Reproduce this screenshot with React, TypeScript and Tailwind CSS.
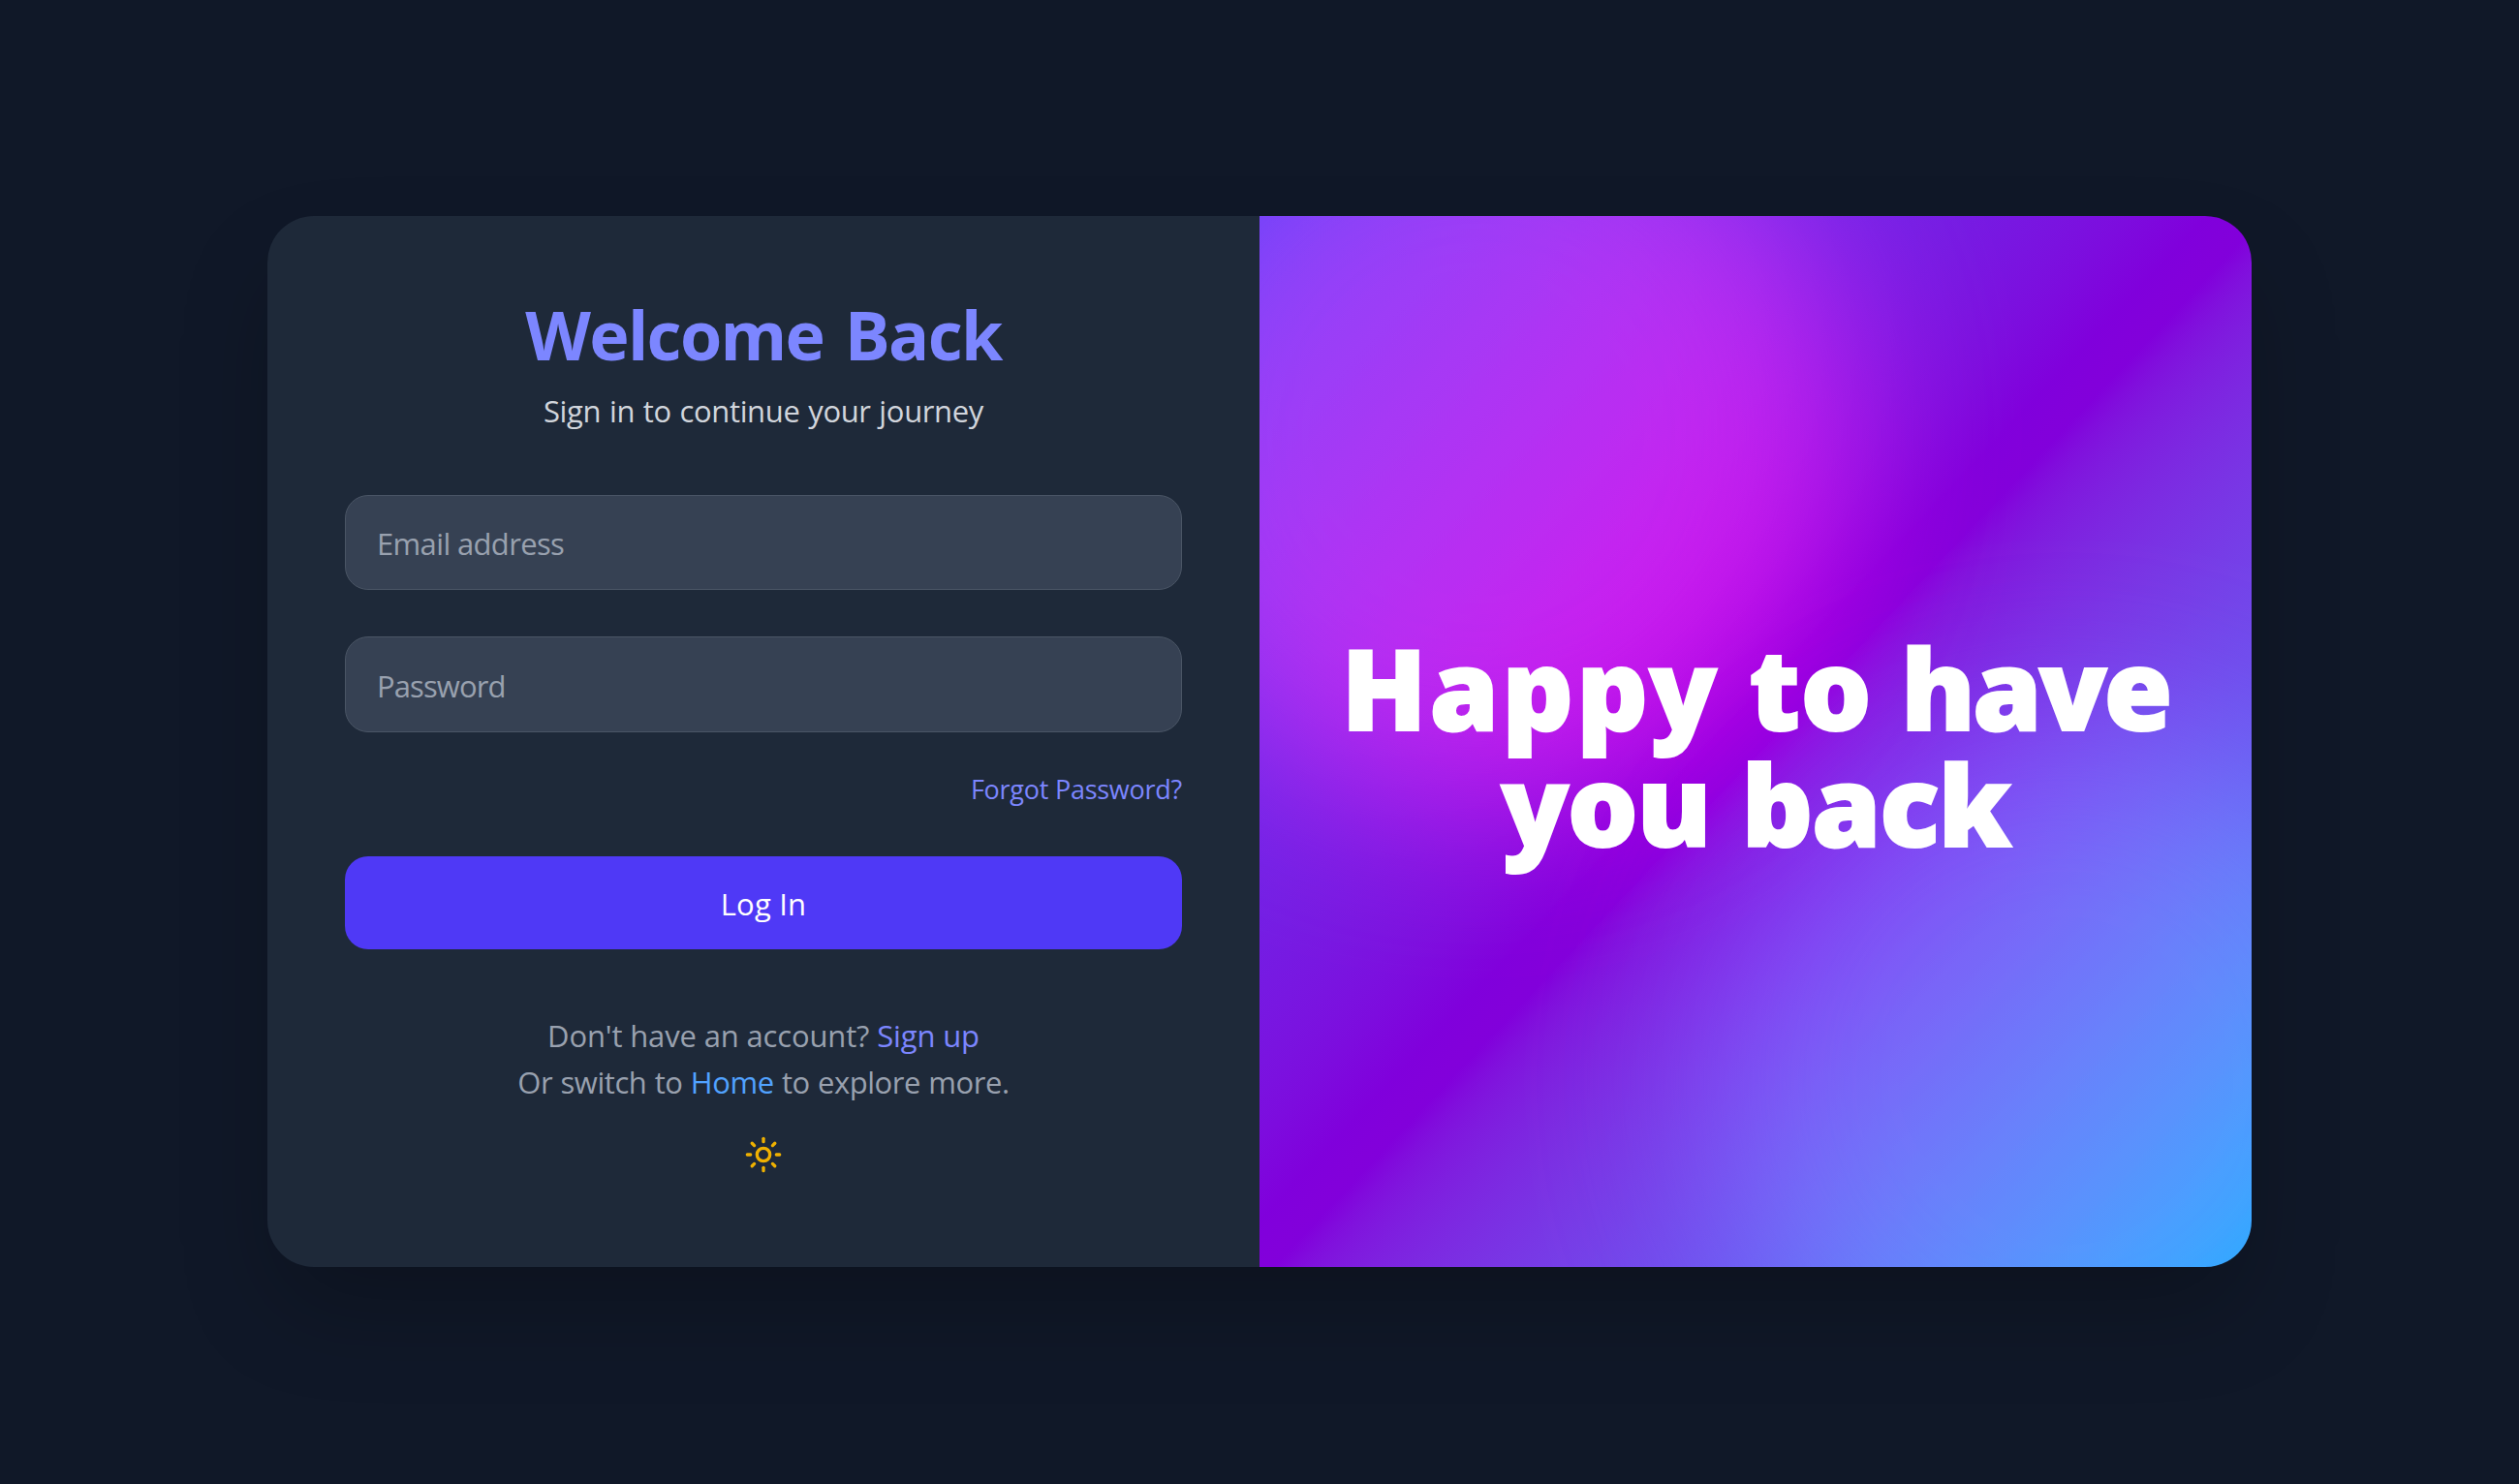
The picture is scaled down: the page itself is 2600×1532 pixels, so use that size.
import { Sun } from "lucide-react";

function Field({ type, placeholder, className }: { type: string; placeholder: string; className: string }) {
  return (
    <input
      type={type}
      placeholder={placeholder}
      className={`block w-full rounded-3xl border border-gray-600 bg-gray-700 px-8 text-[31px] text-white placeholder:text-gray-400 outline-none ${className}`}
    />
  );
}

function LoginForm() {
  return (
    <section className="flex w-1/2 flex-col bg-gray-800 px-20 pt-20">
      <header className="text-center">
        <h1 className="text-[70px] leading-[84px] font-bold tracking-[-1.7px] text-indigo-400 [word-spacing:5px]">Welcome Back</h1>
        <p className="mt-3 text-[31px] leading-[50px] tracking-[-0.35px] text-gray-300 [word-spacing:1px]">Sign in to continue your journey</p>
      </header>
      <form className="mt-[62px] flex flex-col">
        <Field type="email" placeholder="Email address" className="h-[98px] pt-0.5 tracking-[-0.65px]" />
        <Field type="password" placeholder="Password" className="mt-12 h-[99px] pt-[3px] tracking-[-0.9px]" />
        <a className="mt-[39px] self-end text-[27px] leading-10 tracking-[-0.25px] text-indigo-400">Forgot Password?</a>
        <button type="button" className="mt-[49px] h-24 rounded-3xl bg-indigo-600 pt-0.5 text-[31px] tracking-[0.2px] text-white">
          Log In
        </button>
      </form>
      <footer className="mt-[65px] text-center text-[31px] leading-[48px] text-gray-400">
        <p className="tracking-[-0.15px]">
          Don't have an account? <a className="text-indigo-400">Sign up</a>
        </p>
        <p className="tracking-[-0.45px] [word-spacing:0.7px]">
          Or switch to <a className="text-blue-400">Home</a> to explore more.
        </p>
      </footer>
      <button type="button" className="mt-[31px] self-center text-yellow-500">
        <Sun size={40} />
      </button>
    </section>
  );
}

function Greeting() {
  return (
    <section className="relative isolate flex w-1/2 items-center justify-center overflow-hidden bg-linear-to-br from-indigo-600 via-purple-700 to-blue-500">
      <div className="absolute -top-40 -left-40 size-[768px] rounded-full bg-pink-300 opacity-70 mix-blend-overlay blur-[84px]" />
      <div className="absolute -right-48 -bottom-48 size-[768px] rounded-full bg-blue-300 opacity-65 mix-blend-overlay blur-[84px]" />
      <h2 className="relative pt-[9px] text-center font-['Noto_Sans'] text-[115px] leading-[120px] font-black whitespace-nowrap text-white [-webkit-text-stroke:2px_white]">
        <span className="block">
          <span className="tracking-[3.1px]">Happy</span> <span className="tracking-[0.3px]">to</span>{" "}
          <span className="tracking-[-3.1px]">have</span>
        </span>
        <span className="block tracking-[-1.5px] [word-spacing:4px]">you back</span>
      </h2>
    </section>
  );
}

export default function App() {
  return (
    <main className="flex h-[1532px] items-start justify-center bg-gray-900 pt-[223px] font-['Open_Sans',sans-serif]">
      <div className="flex h-[1085px] w-[2048px] overflow-hidden rounded-[48px] shadow-[0_50px_100px_-14px_rgba(0,0,0,0.25)]">
        <LoginForm />
        <Greeting />
      </div>
    </main>
  );
}
